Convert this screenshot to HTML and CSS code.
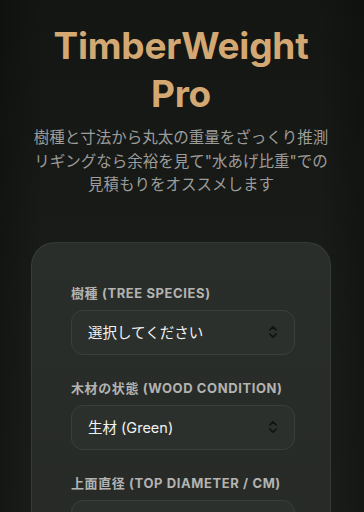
FILE: index.html
```html
<!doctype html>
<html lang="ja">
<head>
    <meta charset="UTF-8">
    <title>TimberWeight Pro</title>
    <link rel="stylesheet" href="styles.css">
</head>
<body>
    <div class="page">
        <h1 class="title">TimberWeight Pro</h1>
        <p class="lead">樹種と寸法から丸太の重量をざっくり推測<br>リギングなら余裕を見て"水あげ比重"での<br>見積もりをオススメします</p>

        <div class="card">
            <div class="field">
                <label class="field-label">樹種 (Tree Species)</label>
                <div class="select-wrap">
                    <select class="select">
                        <option>選択してください</option>
                    </select>
                    <svg class="chevron" width="10" height="14" viewBox="0 0 10 14" fill="none">
                        <path d="M1.8 5 L5 1.8 L8.2 5 M1.8 9 L5 12.2 L8.2 9" stroke="#111311" stroke-width="1.7" stroke-linecap="round" stroke-linejoin="round"/>
                    </svg>
                </div>
            </div>
            <div class="field">
                <label class="field-label">木材の状態 (Wood Condition)</label>
                <div class="select-wrap">
                    <select class="select">
                        <option>生材 (Green)</option>
                    </select>
                    <svg class="chevron" width="10" height="14" viewBox="0 0 10 14" fill="none">
                        <path d="M1.8 5 L5 1.8 L8.2 5 M1.8 9 L5 12.2 L8.2 9" stroke="#111311" stroke-width="1.7" stroke-linecap="round" stroke-linejoin="round"/>
                    </svg>
                </div>
            </div>
            <div class="field">
                <label class="field-label">上面直径 (Top Diameter / cm)</label>
                <input class="input" type="number">
            </div>
        </div>
    </div>
</body>
</html>
```

FILE: styles.css
```css
*{padding:0;margin:0;box-sizing:border-box;}

html,body{
    height:100%;
}
body{
    background:
        linear-gradient(90deg, rgba(0,0,0,0.25), rgba(0,0,0,0) 12%, rgba(0,0,0,0) 88%, rgba(0,0,0,0.25)),
        linear-gradient(180deg, #141614 0%, #191c19 60%, #1b1e1b 100%);
    font-family:"Inter","Noto Sans CJK JP",sans-serif;
    color:#e8e8e8;
    overflow:hidden;
}

.page{
    padding:22px 33px 0 31px;
}

.title{
    font-size:37px;
    line-height:48px;
    font-weight:700;
    color:#d3a873;
    text-align:center;
    letter-spacing:-0.2px;
}

.lead{
    margin-top:8px;
    font-size:15.5px;
    line-height:23.5px;
    color:#9c9c9a;
    text-align:center;
    margin-left:-12px;
    margin-right:-12px;
}

.card{
    margin-top:45px;
    padding:41px 35px 40px 39px;
    background:linear-gradient(180deg, #2a2e2a 0%, #262926 100%);
    border:1px solid rgba(255,255,255,0.07);
    border-radius:24px;
}

.field{
    margin-bottom:24px;
}
.field-label{
    display:block;
    font-size:13px;
    line-height:18px;
    font-weight:700;
    letter-spacing:0.6px;
    text-transform:uppercase;
    color:#b3b3b1;
    margin-bottom:8px;
}

.select-wrap{
    position:relative;
}
.select,
.input{
    display:block;
    width:100%;
    height:45px;
    padding:0 36px 0 16px;
    appearance:none;
    -webkit-appearance:none;
    background:#2c302c;
    border:1px solid #3b3f3b;
    border-radius:12px;
    font-family:"Inter","Noto Sans CJK JP",sans-serif;
    font-size:14.5px;
    color:#f2f2f2;
    outline:none;
}
.chevron{
    position:absolute;
    right:17px;
    top:15px;
    pointer-events:none;
}
```
